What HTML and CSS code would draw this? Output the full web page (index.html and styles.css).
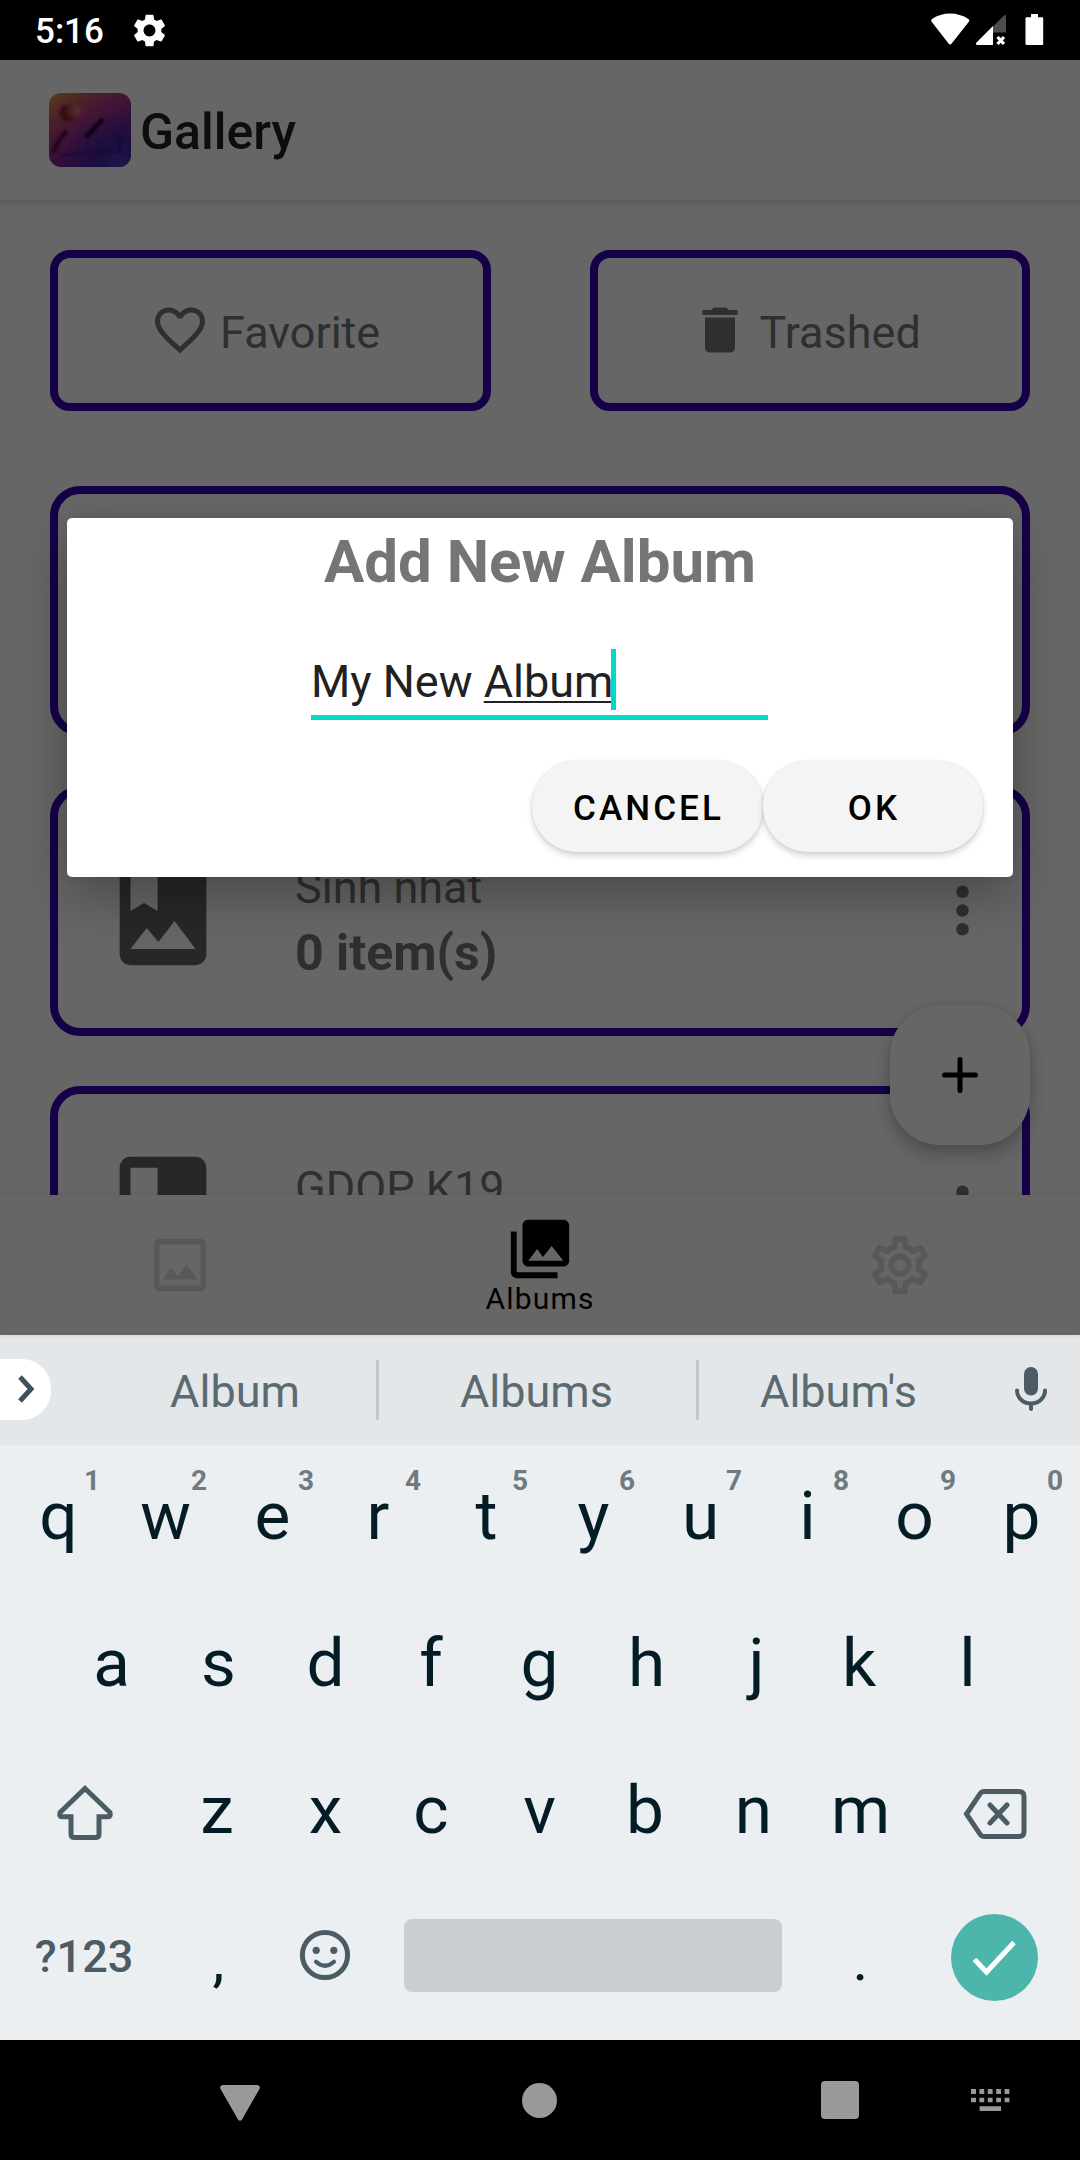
FILE: index.html
```html
<!DOCTYPE html>
<html lang="en">
<head>
<meta charset="utf-8">
<title>Gallery</title>
<link rel="stylesheet" href="styles.css">
</head>
<body>
<div class="phone">
  <header class="status">
    <span class="clock">5:16</span>
    <svg class="status-gear" viewBox="2 2 20 20"><path d="M19.14 12.94c.04-.3.06-.61.06-.94 0-.32-.02-.64-.07-.94l2.03-1.58a.49.49 0 0 0 .12-.61l-1.92-3.32a.488.488 0 0 0-.59-.22l-2.39.96c-.5-.38-1.03-.7-1.62-.94l-.36-2.54a.484.484 0 0 0-.48-.41h-3.84c-.24 0-.43.17-.47.41l-.36 2.54c-.59.24-1.13.57-1.62.94l-2.39-.96c-.22-.08-.47 0-.59.22L2.74 8.87c-.12.21-.08.47.12.61l2.03 1.58c-.05.3-.09.63-.09.94s.02.64.07.94l-2.03 1.58a.49.49 0 0 0-.12.61l1.92 3.32c.12.22.37.29.59.22l2.39-.96c.5.38 1.03.7 1.62.94l.36 2.54c.05.24.24.41.48.41h3.84c.24 0 .44-.17.47-.41l.36-2.54c.59-.24 1.13-.56 1.62-.94l2.39.96c.22.08.47 0 .59-.22l1.92-3.32c.12-.22.07-.47-.12-.61l-2.01-1.58zM12 15.6c-1.98 0-3.6-1.62-3.6-3.6s1.62-3.6 3.6-3.6 3.6 1.62 3.6 3.6-1.62 3.6-3.6 3.6z"/></svg>
    <svg class="status-icons" viewBox="0 0 114 34">
      <path d="M20 31.600Q21 31.600 21.500 30.800L39 8.500Q40 7 38.500 6Q30 .5 20.200 .5Q10 .5 2 6Q.5 7 1.500 8.500L18.700 30.800Q19.200 31.600 20 31.600z"/>
      <path opacity=".3" d="M62.500 14L73.500 3Q76 1 76 3.500V19.500H62.500z"/>
      <path d="M63 13V32H47Q45 31.500 46.500 29.600z"/>
      <path class="cross" d="M67.500 24l6.500 7m0-7l-6.500 7"/>
      <path d="M96.500 4.300H101V1h7v3.300h4.200q1 0 1 1V31q0 1-1 1H96.500q-1 0-1-1V5.300q0-1 1-1z"/>
    </svg>
  </header>

  <main class="app">
    <div class="appbar">
      <svg class="logo" viewBox="0 0 84 76">
        <defs>
          <linearGradient id="base" x1="0" y1="0" x2=".7" y2="1"><stop offset="0" stop-color="#e09a48"/><stop offset=".2" stop-color="#c46060"/><stop offset=".45" stop-color="#a83488"/><stop offset=".75" stop-color="#6c2498"/><stop offset="1" stop-color="#4822a8"/></linearGradient>
          <radialGradient id="corner" cx=".85" cy=".95" r=".7"><stop offset="0" stop-color="#5438c0"/><stop offset=".4" stop-color="#40249c" stop-opacity=".9"/><stop offset="1" stop-color="#5a2498" stop-opacity="0"/></radialGradient>
          <linearGradient id="sun" x1="0" x2="1" y1=".5" y2=".3"><stop offset="0" stop-color="#a03040"/><stop offset="1" stop-color="#de8080"/></linearGradient>
          <filter id="soft"><feGaussianBlur stdDeviation="1.300"/></filter>
          <filter id="edge"><feGaussianBlur stdDeviation=".6"/></filter>
        </defs>
        <g filter="url(#edge)">
          <rect x="1" y="1" width="82" height="74" rx="12" fill="url(#base)"/>
          <rect x="1" y="1" width="82" height="74" rx="12" fill="url(#corner)"/>
        </g>
        <g filter="url(#soft)">
          <circle cx="20" cy="21" r="8.500" fill="#8c2434"/>
          <circle cx="25" cy="19" r="7" fill="url(#sun)"/>
          <path d="M38 45L55 27" stroke="#1c0430" stroke-width="4.500"/>
          <path d="M5 61Q10 47 19 39" stroke="#500c40" stroke-width="4.500" fill="none"/>
          <path d="M13 64Q46 58 72 60L72 43" stroke="#38188c" stroke-width="2" fill="none"/>
        </g>
      </svg>
      <h1>Gallery</h1>
    </div>

    <div class="content">
      <div class="shortcuts">
        <div class="shortcut"><svg class="i60" viewBox="0 0 24 24"><path d="M16.500 3c-1.740 0-3.410.81-4.500 2.090C10.910 3.810 9.240 3 7.500 3 4.420 3 2 5.420 2 8.500c0 3.780 3.400 6.860 8.550 11.540L12 21.350l1.450-1.320C18.600 15.360 22 12.280 22 8.500 22 5.420 19.580 3 16.500 3zm-4.400 15.550l-.1.100-.1-.1C7.140 14.240 4 11.390 4 8.500 4 6.500 5.500 5 7.500 5c1.540 0 3.040.99 3.570 2.360h1.870C13.460 5.990 14.960 5 16.500 5c2 0 3.500 1.500 3.500 3.500 0 2.890-3.140 5.740-7.900 10.050z"/></svg><span>Favorite</span></div>
        <div class="shortcut"><svg class="i60" viewBox="0 0 24 24"><path d="M6 19c0 1.100.9 2 2 2h8c1.100 0 2-.9 2-2V7H6v12zM19 4h-3.500l-1-1h-5l-1 1H5v2h14V4z"/></svg><span>Trashed</span></div>
      </div>

      <div class="albums">
        <div class="album"></div>
        <div class="album">
          <svg class="album-icon" viewBox="0 0 24 24"><path d="M18 2H6c-1.100 0-2 .9-2 2v16c0 1.100.9 2 2 2h12c1.100 0 2-.9 2-2V4c0-1.100-.9-2-2-2zM6 4h5v8l-2.500-1.500L6 12V4zm0 15l3-3.860 2.140 2.580 3-3.860L18 19H6z"/></svg>
          <div class="album-text"><div class="name">Sinh nhat</div><div class="count">0 item(s)</div></div>
          <svg class="more" viewBox="0 0 24 24"><circle cx="12" cy="6" r="2"/><circle cx="12" cy="12" r="2"/><circle cx="12" cy="18" r="2"/></svg>
        </div>
        <div class="album">
          <svg class="album-icon" viewBox="0 0 24 24"><path d="M18 2H6c-1.100 0-2 .9-2 2v16c0 1.100.9 2 2 2h12c1.100 0 2-.9 2-2V4c0-1.100-.9-2-2-2zM6 4h5v8l-2.500-1.500L6 12V4zm0 15l3-3.860 2.140 2.580 3-3.860L18 19H6z"/></svg>
          <div class="album-text"><div class="name">GDOP K19</div></div>
          <svg class="more" viewBox="0 0 24 24"><circle cx="12" cy="6" r="2"/><circle cx="12" cy="12" r="2"/><circle cx="12" cy="18" r="2"/></svg>
        </div>
      </div>
      <div class="fab"><svg viewBox="0 0 36 36"><path d="M18 2.500v31M2.500 18h31"/></svg></div>
    </div>

    <nav class="tabs">
      <div class="tab"><svg class="i70" viewBox="0 0 24 24"><path d="M19 5v14H5V5h14m0-2H5c-1.100 0-2 .9-2 2v14c0 1.100.9 2 2 2h14c1.100 0 2-.9 2-2V5c0-1.100-.9-2-2-2zm-4.860 8.860l-3 3.870L9 13.140 6 17h12l-3.860-5.140z"/></svg></div>
      <div class="tab active"><svg class="i70" viewBox="0 0 24 24"><path d="M22 16V4c0-1.100-.9-2-2-2H8c-1.100 0-2 .9-2 2v12c0 1.100.9 2 2 2h12c1.100 0 2-.9 2-2zm-11-4l2.030 2.710L16 11l4 5H8l3-4zM2 6v14c0 1.100.9 2 2 2h14v-2H4V6H2z"/></svg><span>Albums</span></div>
      <div class="tab"><svg class="i70" viewBox="0 0 24 24"><path d="M19.430 12.980c.04-.32.07-.64.07-.98 0-.34-.03-.66-.07-.98l2.110-1.650c.19-.15.24-.42.120-.64l-2-3.460c-.09-.16-.26-.25-.44-.25-.06 0-.12.010-.17.030l-2.490 1c-.52-.4-1.080-.73-1.690-.98l-.38-2.650C14.460 2.180 14.250 2 14 2h-4c-.25 0-.46.18-.49.42l-.38 2.650c-.61.25-1.170.59-1.690.98l-2.490-1c-.06-.02-.12-.03-.18-.03-.17 0-.34.09-.43.25l-2 3.460c-.13.22-.07.49.12.64l2.110 1.650c-.04.32-.07.65-.07.98 0 .33.03.66.07.98l-2.110 1.650c-.19.15-.24.42-.12.64l2 3.460c.09.16.26.25.44.25.06 0 .12-.01.17-.03l2.490-1c.52.4 1.080.73 1.690.98l.38 2.650c.03.24.24.42.49.42h4c.25 0 .46-.18.49-.42l.38-2.650c.61-.25 1.170-.59 1.690-.98l2.490 1c.06.02.12.03.18.03.17 0 .34-.09.43-.25l2-3.460c.12-.22.07-.49-.12-.64l-2.110-1.650zm-1.980-1.710c.04.31.05.52.05.73 0 .21-.02.43-.05.73l-.14 1.130.89.7 1.080.84-.7 1.210-1.270-.51-1.040-.42-.9.68c-.43.32-.84.56-1.250.73l-1.060.43-.16 1.130-.2 1.350h-1.400l-.19-1.350-.16-1.130-1.060-.43c-.43-.18-.83-.41-1.230-.71l-.91-.7-1.060.43-1.270.51-.7-1.210 1.080-.84.89-.7-.14-1.130c-.03-.31-.05-.54-.05-.74s.02-.43.05-.73l.14-1.130-.89-.7-1.080-.84.7-1.210 1.270.51 1.040.42.9-.68c.43-.32.84-.56 1.250-.73l1.060-.43.16-1.130.2-1.350h1.390l.19 1.350.16 1.130 1.060.43c.43.18.83.41 1.230.71l.91.7 1.060-.43 1.270-.51.7 1.210-1.070.85-.89.7.14 1.130zM12 8c-2.210 0-4 1.790-4 4s1.790 4 4 4 4-1.790 4-4-1.790-4-4-4zm0 6c-1.100 0-2-.9-2-2s.9-2 2-2 2 .9 2 2-.9 2-2 2z"/></svg></div>
    </nav>

    <div class="scrim">
      <div class="dialog">
        <h2>Add New Album</h2>
        <div class="field"><span>My New <span class="composing">Album</span></span><i class="caret"></i></div>
        <div class="actions"><div class="btn cancel">CANCEL</div><div class="btn ok">OK</div></div>
      </div>
    </div>
  </main>

  <section class="keyboard">
    <div class="strip">
      <div class="expand"><svg viewBox="0 0 20 30"><path d="M3 3l11 12L3 27"/></svg></div>
      <div class="word first">Album</div>
      <i class="divider"></i>
      <div class="word mid">Albums</div>
      <i class="divider"></i>
      <div class="word last">Album's</div>
      <svg class="mic" viewBox="0 0 34 46"><rect x="10" y="1" width="14" height="28.500" rx="7"/><path d="M3 24.500a14 13 0 0 0 28 0M17 38v5"/></svg>
    </div>
    <div class="keys">
      <div class="row">
        <div class="key">q<sup>1</sup></div><div class="key">w<sup>2</sup></div><div class="key">e<sup>3</sup></div><div class="key nudge-left">r<sup>4</sup></div><div class="key">t<sup>5</sup></div><div class="key">y<sup>6</sup></div><div class="key">u<sup>7</sup></div><div class="key">i<sup>8</sup></div><div class="key">o<sup>9</sup></div><div class="key">p<sup>0</sup></div>
      </div>
      <div class="row inset">
        <div class="key">a</div><div class="key">s</div><div class="key">d</div><div class="key nudge-left">f</div><div class="key">g</div><div class="key">h</div><div class="key nudge-right">j</div><div class="key nudge-left">k</div><div class="key">l</div>
      </div>
      <div class="row">
        <div class="wide shift"><svg width="58" height="58" viewBox="0 0 58 58"><path d="M29 5.500L54 29.500Q55 33.800 52 33.800H43V51Q43 54.500 39.500 54.500H18.500Q15 54.500 15 51V33.800H6Q3 33.800 4 29.500z"/></svg></div>
        <div class="key nudge-left">z</div><div class="key">x</div><div class="key nudge-left">c</div><div class="key">v</div><div class="key nudge-left">b</div><div class="key">n</div><div class="key">m</div>
        <div class="wide"><svg class="del" width="64" height="52" viewBox="0 0 64 52"><path d="M21 3.500H56Q61 3.500 61 8.500V43.500Q61 48.500 56 48.500H21Q18.500 48.500 17 46L3.500 26L17 6Q18.500 3.500 21 3.500zM27 17L44 35M44 17L27 35"/></svg></div>
      </div>
      <div class="row">
        <div class="wide symbols">?123</div>
        <div class="key punct">,</div>
        <div class="key emoji"><svg width="52" height="52" viewBox="0 0 52 52"><circle class="ring" cx="26" cy="26" r="22.600"/><circle cx="17.200" cy="21.300" r="3.600"/><circle cx="34.800" cy="21.300" r="3.600"/><path d="M17 32.800q9 8 18 0"/></svg></div>
        <div class="space"><i></i></div>
        <div class="key punct">.</div>
        <div class="wide enter"><div class="done"><svg viewBox="0 0 44 36"><path d="M2.500 19.500L14.500 32L42 2.500"/></svg></div></div>
      </div>
    </div>
  </section>

  <footer class="sysnav">
    <svg class="back" viewBox="0 0 40 36"><path d="M3 0H37Q41 .5 39.500 4L22 34.500Q20 37 18 34.500L.5 4Q-1 .5 3 0z"/></svg>
    <i class="home"></i>
    <i class="recent"></i>
    <svg class="ime" viewBox="0 0 39 23"><path d="M0 0h5v5H0zM8.400 0h4.800v5H8.400zM16.800 0h4.800v5h-4.800zM25.200 0H30v5h-4.800zM33.600 0h4.800v5h-4.800zM0 8.800h5v4.400H0zM8.400 8.800h4.800v4.400H8.400zM16.800 8.800h4.800v4.400h-4.800zM25.200 8.800H30v4.400h-4.800zM33.600 8.800h4.800v4.400h-4.800zM8.600 17.200H30V22H8.600z"/></svg>
  </footer>
</div>
</body>
</html>
```
FILE: styles.css
```css
* { box-sizing: border-box; }
body { margin: 0; font-family: Roboto, "Liberation Sans", sans-serif; }
svg { display: block; flex: none; }
h1, h2 { margin: 0; }
.phone { width: 1080px; height: 2160px; display: flex; flex-direction: column; overflow: hidden; background: #000; }

/* status bar */
.status { height: 60px; flex: none; display: flex; align-items: center; background: #000; color: #fff; padding: 0 36px 0 35px; }
.clock { font-size: 35px; font-weight: 500; line-height: 42px; padding-top: 3px; width: 98px; }
.status-gear { width: 33px; height: 33px; fill: #fff; }
.status-icons { width: 114px; height: 34px; margin-left: auto; margin-bottom: 1px; fill: #fff; }
.status-icons .cross { stroke: #fff; stroke-width: 3.200; fill: none; }

/* application */
.app { position: relative; height: 1275px; flex: none; display: flex; flex-direction: column; background: #fff; }
.appbar { height: 140px; flex: none; display: flex; align-items: center; padding-left: 48px; box-shadow: 0 1px 9px rgba(0, 0, 0, .2); }
.logo { width: 84px; height: 76px; }
.appbar h1 { margin-left: 8px; padding-top: 3px; font-size: 50px; font-weight: 500; color: #212121; }
.content { position: relative; height: 995px; overflow: hidden; padding: 50px 50px 0; color: #757575; }
.shortcuts { display: flex; gap: 99px; height: 161px; }
.shortcut { flex: 1; display: flex; align-items: center; border: 8px solid #3700b3; border-radius: 20px; padding-left: 92px; font-size: 45px; }
.shortcut span { margin-left: 10px; padding-top: 4px; }
.i60 { width: 60px; height: 60px; fill: #757575; margin-bottom: 2px; }
.albums { display: flex; flex-direction: column; gap: 50px; margin-top: 75px; }
.album { height: 250px; flex: none; display: flex; align-items: center; border: 8px solid #3700b3; border-radius: 30px; padding: 0 22px 0 40px; }
.album-icon { width: 130px; height: 130px; fill: #616161; }
.album-text { flex: 1; align-self: flex-start; padding: 67px 0 0 67px; }
.name { font-size: 45px; line-height: 54px; }
.count { font-size: 50px; line-height: 66px; font-weight: 700; margin-top: 5px; }
.more { width: 75px; height: 75px; fill: #757575; margin-bottom: 2px; }
.fab { position: absolute; left: 890px; top: 805px; width: 140px; height: 140px; border-radius: 50px; background: #fff; display: flex; align-items: center; justify-content: center; box-shadow: 0 10px 18px rgba(0, 0, 0, .24), 0 0 6px rgba(0, 0, 0, .1); }
.fab svg { width: 36px; height: 36px; fill: none; stroke: #000; stroke-width: 5; stroke-linecap: round; }
.tabs { position: relative; height: 140px; display: flex; background: #fff; box-shadow: 0 0 4px rgba(0, 0, 0, .12); }
.tab { flex: 1; display: flex; flex-direction: column; align-items: center; justify-content: center; }
.i70 { width: 70px; height: 70px; fill: #dbdbdb; }
.active .i70 { fill: #000; }
.active span { font-size: 30px; line-height: 35px; letter-spacing: 1.200px; color: #000; margin-top: -3px; }
.scrim { position: absolute; inset: 0; display: flex; justify-content: center; align-items: flex-start; padding-top: 458px; background: rgba(0, 0, 0, .6); }

/* dialog */
.dialog { width: 946px; height: 359px; background: #fff; border-radius: 5px; padding-top: 9px; box-shadow: 0 20px 50px rgba(0, 0, 0, .27), 0 0 10px rgba(0, 0, 0, .07); }
.dialog h2 { font-size: 60px; line-height: 70px; font-weight: 700; color: #757575; text-align: center; }
.field { display: flex; align-items: flex-start; width: 457px; height: 71px; margin: 52px 0 0 244px; border-bottom: 5px solid #03dac5; font-size: 45px; line-height: 66px; color: #212121; white-space: nowrap; }
.composing { text-decoration: underline; text-decoration-thickness: 2px; text-underline-offset: 4px; text-decoration-skip-ink: none; }
.caret { width: 5px; height: 61px; background: #03dac5; margin-left: -3px; }
.actions { display: flex; justify-content: flex-end; width: 916px; margin-top: 41px; }
.btn { height: 91px; border-radius: 45px; background: #f4f4f4; color: #000; font-size: 35px; font-weight: 500; letter-spacing: 3.100px; line-height: 95px; text-align: center; padding-left: 2px; box-shadow: 0 4px 6px rgba(0, 0, 0, .16), 0 0 3px rgba(0, 0, 0, .1); }
.cancel { width: 231px; }
.ok { width: 220px; }

/* keyboard */
.keyboard { height: 705px; flex: none; background: #eceff1; }
.strip { height: 110px; display: flex; align-items: center; background: #e3e7e9; color: #5b6a70; font-size: 45px; }
.expand { width: 51px; height: 61px; background: #fff; border-radius: 0 29px 29px 0; margin-bottom: 2px; padding: 15px 0 0 17px; }
.expand svg { width: 20px; height: 30px; fill: none; stroke: #3f515b; stroke-width: 5; }
.word { text-align: center; padding-top: 2px; }
.first { width: 325px; padding-left: 43px; }
.mid { width: 317px; padding-right: 2px; }
.last { width: 279px; }
.divider { width: 3px; height: 60px; background: #c3c8cb; }
.mic { width: 34px; height: 46px; margin: 0 0 2px 36px; fill: #4b5c65; }
.mic path { fill: none; stroke: #4b5c65; stroke-width: 4; stroke-linecap: round; }
.keys { padding: 0 5px; color: #041c26; }
.row { display: flex; height: 147px; }
.inset { padding-left: 53px; }
.key { position: relative; width: 107px; display: flex; align-items: center; justify-content: center; padding-bottom: 7px; font-size: 67.500px; }
.key.nudge-left { padding-right: 3px; }
.key.nudge-right { padding-left: 6px; }
.key sup { position: absolute; left: 77px; top: 19px; width: 20px; text-align: center; font-size: 28px; line-height: 33px; font-weight: 700; color: #6f7b80; }
.wide { width: 160px; display: flex; align-items: center; justify-content: center; color: #4b5c65; }
.wide svg, .emoji svg { fill: none; stroke: #4b5c65; stroke-width: 5; stroke-linecap: round; }
.wide.shift { padding-bottom: 2px; }
.wide .del { margin: 3px 0 0 2px; }
.symbols { font-size: 45px; font-weight: 500; padding: 0 2px 7px 0; }
.key.punct { font-size: 60px; padding-bottom: 0; }
.key.emoji { padding: 0 2px 9px 0; }
.emoji circle { fill: #4b5c65; stroke: none; }
.emoji .ring { fill: none; stroke: #4b5c65; }
.emoji path { stroke-width: 4.200; }
.space { width: 428px; display: flex; align-items: center; justify-content: center; padding-bottom: 8px; }
.space i { width: 378px; height: 73px; border-radius: 8px; background: #c9ced1; }
.enter { padding-bottom: 4px; }
.done { width: 87px; height: 87px; border-radius: 50%; background: #4db6ac; display: flex; align-items: center; justify-content: center; }
.wide .done svg { width: 44px; height: 36px; stroke: #fff; stroke-linecap: butt; }

/* system navigation */
.sysnav { height: 120px; flex: none; display: flex; align-items: center; background: #000; padding-left: 220px; }
.back { width: 40px; height: 36px; margin-top: 5px; fill: #999; }
.home { width: 35px; height: 35px; border-radius: 50%; background: #999; margin-left: 262px; }
.recent { width: 38px; height: 38px; border-radius: 4px; background: #999; margin-left: 264px; }
.ime { width: 39px; height: 23px; margin-left: 112px; fill: #999; }
```
